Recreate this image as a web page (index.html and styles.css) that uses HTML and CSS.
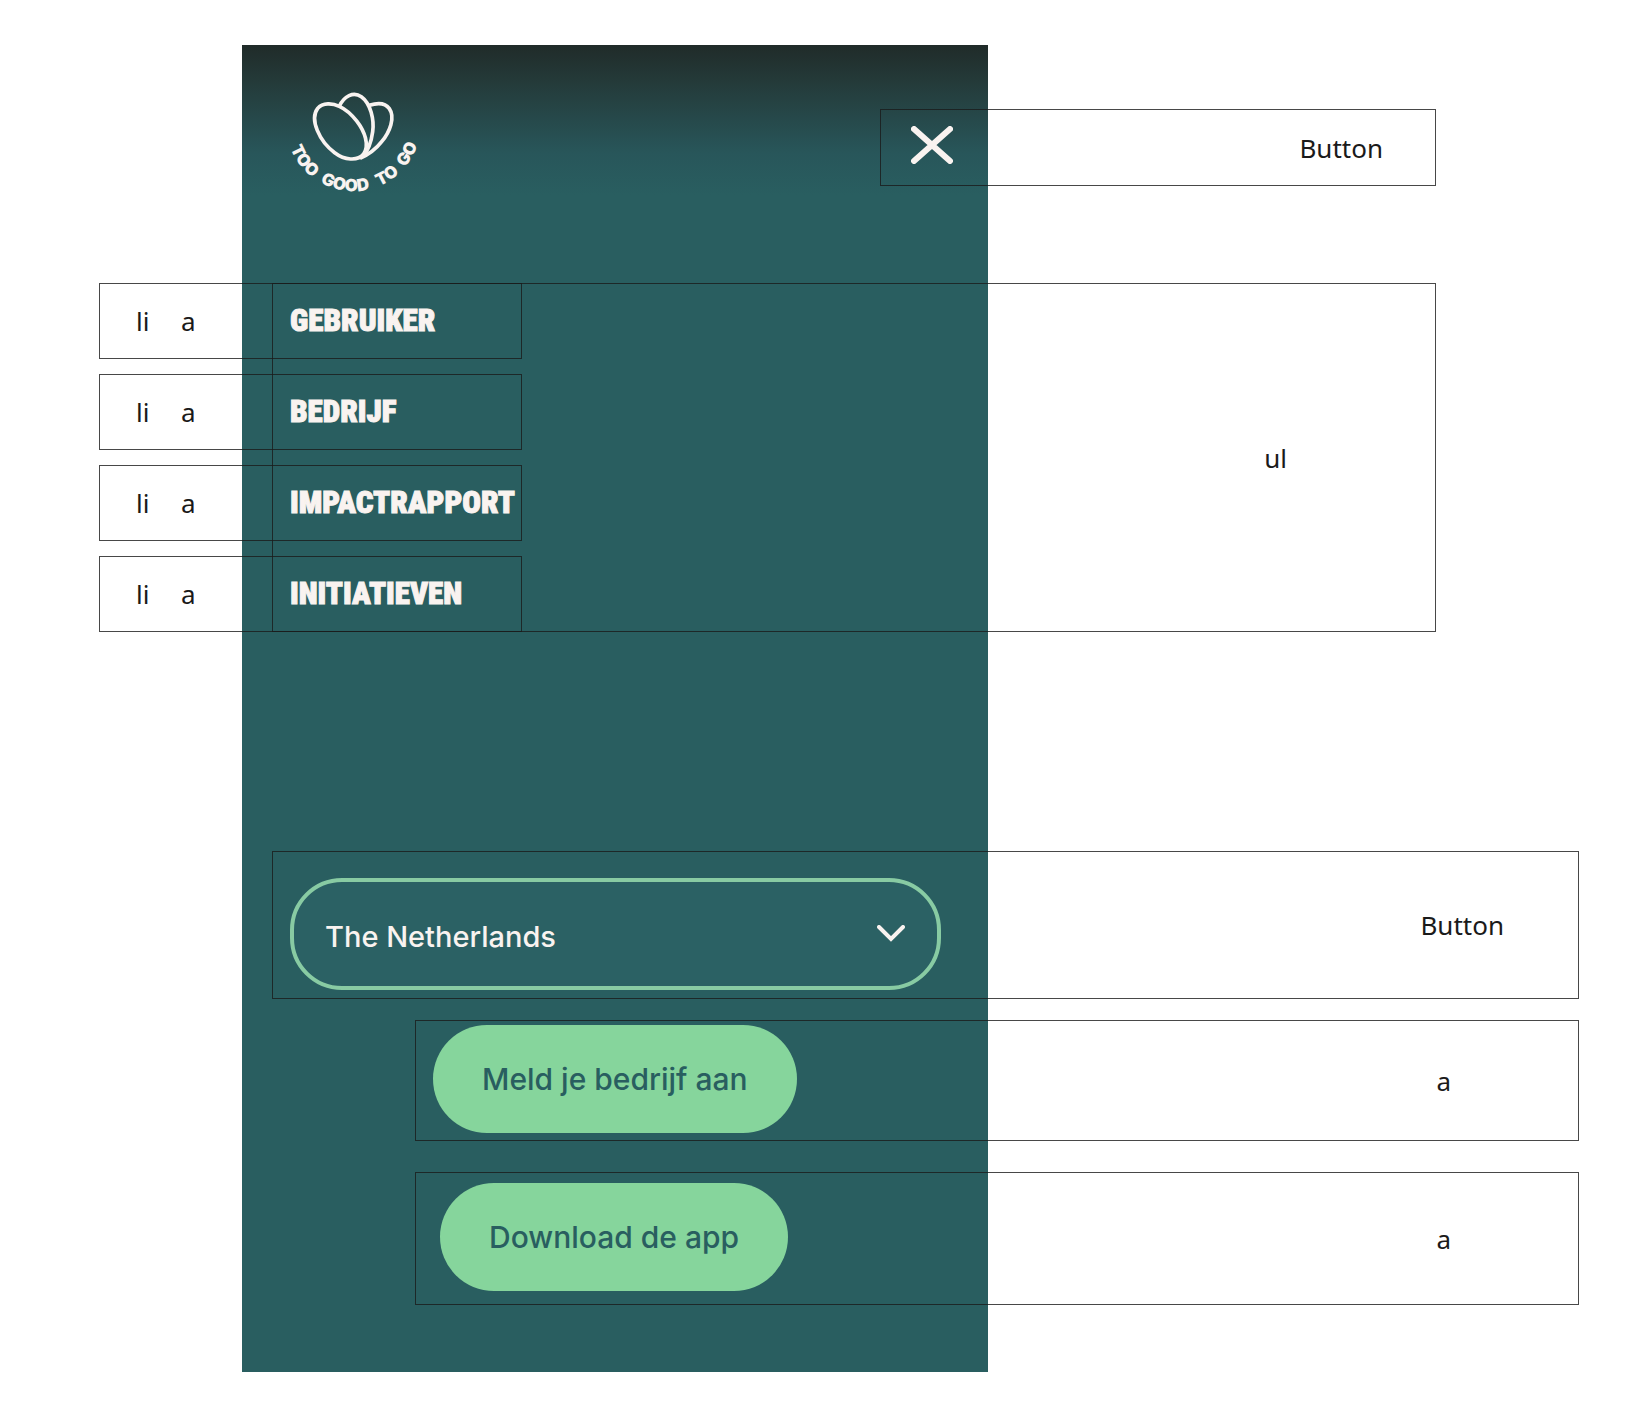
FILE: index.html
```html
<!DOCTYPE html>
<html lang="nl">
<head>
<meta charset="utf-8">
<meta name="viewport" content="width=device-width, initial-scale=1">
<title>Too Good To Go – menu</title>
<link rel="stylesheet" href="styles.css">
</head>
<body>
<main class="board">
  <div class="panel"></div>
  <div class="content">
    <header class="header">
      <svg class="logo" viewBox="54 63 396 312" role="img" aria-label="Too Good To Go">
        <g class="petals">
          <path d="M208 109 C188 99 158 97 143 115 C118 148 148 214 194 248 C223 270 262 275 281 252 C299 225 284 184 261 154 C246 135 226 117 208 109 Z"/>
          <path d="M208 109 C222 78 250 64 274 80 C302 100 313 150 308 185 C304 215 296 240 278 260"/>
          <path d="M298 106 C322 98 346 99 358 116 C376 142 360 185 335 215 C318 237 300 252 270 265"/>
        </g>
        <path id="arc" class="arc" d="M48 162 A202 202 0 0 0 452 162"/>
        <text class="wordmark"><textPath href="#arc" startOffset="130">TOO</textPath></text>
        <text class="wordmark"><textPath href="#arc" startOffset="290">GOOD</textPath></text>
        <text class="wordmark"><textPath href="#arc" startOffset="433">TO</textPath></text>
        <text class="wordmark"><textPath href="#arc" startOffset="532">GO</textPath></text>
      </svg>
      <div class="frame frame-close">
        <button class="close" type="button" aria-label="Sluiten">
          <svg class="close-icon" viewBox="0 0 42 38" aria-hidden="true"><path d="M3 3 L39 35 M39 3 L3 35"/></svg>
        </button>
        <span class="note">Button</span>
      </div>
    </header>

    <nav class="frame frame-menu">
      <ul class="menu">
        <li class="item"><span class="note">li</span><span class="note">a</span><a class="link" href="#gebruiker">GEBRUIKER</a></li>
        <li class="item"><span class="note">li</span><span class="note">a</span><a class="link" href="#bedrijf">BEDRIJF</a></li>
        <li class="item"><span class="note">li</span><span class="note">a</span><a class="link" href="#impactrapport">IMPACTRAPPORT</a></li>
        <li class="item"><span class="note">li</span><span class="note">a</span><a class="link" href="#initiatieven">INITIATIEVEN</a></li>
      </ul>
      <span class="note">ul</span>
    </nav>

    <div class="frame frame-country">
      <div class="country">
        <select class="country-select" aria-label="Land">
          <option>The Netherlands</option>
        </select>
        <svg class="chevron" viewBox="0 0 28 18" aria-hidden="true"><path d="M2 2 L14 14 L26 2"/></svg>
      </div>
      <span class="note">Button</span>
    </div>

    <div class="frame frame-join">
      <a class="pill" href="#aanmelden">Meld je bedrijf aan</a>
      <span class="note">a</span>
    </div>

    <div class="frame frame-download">
      <a class="pill" href="#download">Download de app</a>
      <span class="note">a</span>
    </div>
  </div>
</main>
</body>
</html>
```

FILE: styles.css
```css
* {
  box-sizing: border-box;
}

body {
  margin: 0;
  background: #fff;
  color: #1a1a1a;
  font-family: "Noto Sans", "Open Sans", sans-serif;
}

.board {
  display: grid;
  grid-template-columns: 242px 746px 1fr;
  padding: 45px 0;
}

.panel {
  grid-area: 1 / 2;
  background: linear-gradient(#202b29 0, #243a39 36px, #28565a 108px, #295e60 150px);
}

.content {
  grid-area: 1 / 1 / 2 / -1;
  display: flex;
  flex-direction: column;
  padding-bottom: 67px;
}

/* Outlined regions with a tag name at the right */
.frame {
  display: flex;
  align-items: center;
  justify-content: space-between;
  border: 1px solid rgba(26, 26, 26, 0.8);
}

.note {
  font-size: 26px;
  line-height: 36px;
}

/* Header */
.header {
  display: flex;
  align-items: flex-start;
  gap: 460px;
  padding: 46px 192px 0 288px;
}

.logo {
  flex: none;
  width: 132px;
  height: 104px;
  overflow: visible;
}

.petals {
  fill: none;
  stroke: #f9f3f0;
  stroke-width: 11;
  stroke-linejoin: round;
}

.arc {
  fill: none;
}

.wordmark {
  fill: #f9f3f0;
  font: 900 51px Inter, sans-serif;
  text-anchor: middle;
}

.frame-close {
  flex: 1;
  height: 77px;
  margin-top: 18px;
  padding: 0 52px 0 22px;
}

.close {
  display: flex;
  margin-bottom: 6px;
  padding: 8px;
  border: 0;
  background: none;
}

.close-icon {
  width: 42px;
  height: 38px;
  fill: none;
  stroke: #f9f3f0;
  stroke-width: 6;
  stroke-linecap: round;
}

/* Menu */
.frame-menu {
  margin: 88px 192px 0 272px;
  padding-right: 148px;
}

.menu {
  display: flex;
  flex-direction: column;
  gap: 15px;
  width: 423px;
  margin: -1px 0 -1px -174px;
  padding: 0;
  list-style: none;
}

.item {
  display: grid;
  grid-template-columns: 45px 109px 1fr;
  align-items: center;
  height: 76px;
  padding-left: 36px;
  border: 1px solid rgba(26, 26, 26, 0.8);
}

.link {
  color: #f9f3f0;
  font-family: "Liberation Sans Narrow", "Roboto Condensed", Roboto, sans-serif;
  font-size: 31px;
  font-weight: 900;
  line-height: 36px;
  text-decoration: none;
  -webkit-text-stroke: 1px #f9f3f0;
}

/* Country */
.frame-country {
  height: 148px;
  margin: 219px 49px 0 272px;
  padding: 0 74px 0 17px;
}

.country {
  display: grid;
  align-items: center;
  width: 651px;
  margin-top: 18px;
}

.country-select {
  grid-area: 1 / 1;
  height: 112px;
  padding: 4px 31px 0;
  border: 4px solid #88cba3;
  border-radius: 52px;
  appearance: none;
  background: #2b6164;
  color: #f9f3f0;
  font: 500 29px Inter, sans-serif;
}

.chevron {
  grid-area: 1 / 1;
  justify-self: end;
  width: 28px;
  height: 18px;
  margin-right: 36px;
  fill: none;
  stroke: #f9f3f0;
  stroke-width: 4;
  stroke-linecap: round;
  pointer-events: none;
}

/* Actions */
.frame-join {
  height: 121px;
  margin: 21px 49px 0 415px;
  padding: 0 127px 0 17px;
}

.frame-download {
  height: 133px;
  margin: 31px 49px 0 415px;
  padding: 0 127px 0 24px;
}

.pill {
  margin-bottom: 4px;
  padding: 36px 49px;
  border-radius: 54px;
  background: #86d59c;
  color: #295e60;
  font: 500 30px/36px Inter, sans-serif;
  text-decoration: none;
}
```
